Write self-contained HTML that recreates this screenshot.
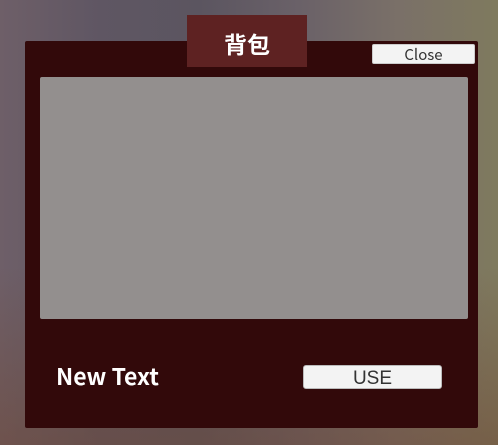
<!DOCTYPE html>
<html><head><meta charset="utf-8"><style>
body{margin:0;width:498px;height:445px;overflow:hidden;position:relative;font-family:"Liberation Sans","Noto Sans CJK SC",sans-serif;
background:linear-gradient(90deg,#6e5f68 0%,#5f5663 20%,#5b5560 40%,#6a6168 60%,#7a7068 80%,#7f7a5e 100%);}
.bg2{position:absolute;left:0;top:0;width:498px;height:445px;background:linear-gradient(180deg,rgba(0,0,0,0) 60%,rgba(110,70,50,.5) 100%);}
.panel{position:absolute;left:25px;top:41px;width:453px;height:387px;background:#32090a;border-radius:2px;}
.title{position:absolute;left:187px;top:15px;width:120px;height:52px;background:#5e2222;color:#fff;font-size:23px;font-weight:bold;text-align:center;line-height:56px;font-family:"Noto Sans CJK SC",sans-serif;}
.close{position:absolute;left:372px;top:44px;width:101px;height:18px;background:#f3f3f3;border:1px solid #ccc;border-radius:2px;color:#333;font-size:15px;text-align:center;line-height:20px;font-family:"Noto Sans CJK SC",sans-serif;}
.gray{position:absolute;left:40px;top:77px;width:428px;height:242px;background:#938f8e;border-radius:2px;}
.nt{position:absolute;left:56px;top:361px;color:#fff;font-size:23px;font-weight:bold;font-family:"Noto Sans CJK SC",sans-serif;line-height:28px;}
.use{position:absolute;left:303px;top:365px;width:137px;height:22px;background:#f3f3f3;border:1px solid #bbb;border-radius:3px;color:#333;font-size:19px;text-align:center;line-height:25px;}
</style></head><body>
<div class="bg2"></div>
<div class="panel"></div>
<div class="title">背包</div>
<div class="close">Close</div>
<div class="gray"></div>
<div class="nt">New Text</div>
<div class="use">USE</div>
</body></html>
